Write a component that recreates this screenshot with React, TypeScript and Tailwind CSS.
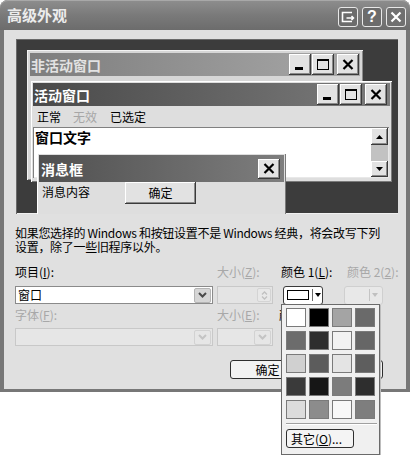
import React from "react";

const raised =
  "shadow-[inset_-1px_-1px_0_#3a3a3a,inset_1px_1px_0_#ffffff,inset_-2px_-2px_0_#8a8a8a]";

function CapBtn({ kind, w = 22, h = 21 }: { kind: "min" | "max" | "close"; w?: number; h?: number }) {
  return (
    <div
      className={`relative flex items-center justify-center bg-[#e2e2e2] ${raised}`}
      style={{ width: w, height: h }}
    >
      {kind === "min" && <div className="absolute left-[6px] bottom-[5px] w-[8px] h-[3px] bg-black" />}
      {kind === "max" && <div className="w-[12px] h-[11px] border border-black border-t-[2px] mb-[1px]" />}
      {kind === "close" && (
        <svg width="12" height="11" viewBox="0 0 12 11">
          <path d="M1.5 1 L10.5 10 M10.5 1 L1.5 10" stroke="#000" strokeWidth="2.2" />
        </svg>
      )}
    </div>
  );
}

function Chevron({ disabled }: { disabled?: boolean }) {
  return (
    <svg width="9" height="6" viewBox="0 0 9 6">
      <path d="M1 1 L4.5 4.5 L8 1" stroke={disabled ? "#c4c4c4" : "#4a4a4a"} strokeWidth="2" fill="none" />
    </svg>
  );
}

function ComboArrow({ disabled }: { disabled?: boolean }) {
  return (
    <div
      className={`w-[17px] h-[15px] rounded-[2px] flex items-center justify-center border ${
        disabled ? "bg-[#e6e6e6] border-[#d2d2d2]" : "bg-[#d6d6d6] border-[#b4b4b4]"
      }`}
    >
      <Chevron disabled={disabled} />
    </div>
  );
}

const swatches = [
  ["#ffffff", "#000000", "#a4a4a4", "#6a6a6a"],
  ["#6c6c6c", "#2e2e2e", "#f2f2f2", "#666666"],
  ["#d0d0d0", "#5c5c5c", "#e4e4e4", "#5e5e5e"],
  ["#3a3a3a", "#161616", "#7c7c7c", "#2e2e2e"],
  ["#dcdcdc", "#8c8c8c", "#f8f8f8", "#7e7e7e"],
];

export default function App() {
  return (
    <div className="w-[412px] h-[455px] bg-white relative overflow-hidden font-['Noto_Sans_CJK_SC','Liberation_Sans',sans-serif] text-black">
      {/* Dialog */}
      <div className="w-[410px] h-[392px] rounded-t-[8px] bg-[#777777] flex flex-col">
        {/* Title bar */}
        <div className="h-[30px] flex items-start rounded-t-[8px] bg-gradient-to-b from-[#8e8e8e] via-[#7a7a7a] to-[#6c6c6c] shadow-[inset_0_1px_0_#a8a8a8]">
          <div className="pl-[7px] pt-[5px] text-[15px] leading-[20px] font-bold text-[#ececec]">
            高级外观
          </div>
          <div className="ml-auto mt-[7px] mr-[4px] flex gap-[4px]">
            <div className="w-[20px] h-[20px] rounded-[3px] border border-[#e8e8e8] bg-[#6c6c6c] flex items-center justify-center">
              <svg width="16" height="14" viewBox="0 0 16 14">
                <path d="M12 2.5 H2.5 V11.5 H12" stroke="#fff" strokeWidth="1.6" fill="none" />
                <path d="M6.5 8 H13.5 M11.5 6 L13.5 8 L11.5 10" stroke="#fff" strokeWidth="1.5" fill="none" />
              </svg>
            </div>
            <div className="w-[20px] h-[20px] rounded-[3px] border border-[#e8e8e8] bg-[#6c6c6c] flex items-center justify-center text-white font-bold text-[16px] leading-none font-['Liberation_Sans',sans-serif]">
              ?
            </div>
            <div className="w-[20px] h-[20px] rounded-[3px] border border-[#e8e8e8] bg-[#707070] flex items-center justify-center">
              <svg width="12" height="12" viewBox="0 0 12 12">
                <path d="M1.5 1.5 L10.5 10.5 M10.5 1.5 L1.5 10.5" stroke="#fff" strokeWidth="2.2" />
              </svg>
            </div>
          </div>
        </div>

        {/* Body */}
        <div className="mx-[4px] h-[359px] bg-[#e0e0e0] flex flex-col">
          {/* Preview canvas */}
          <div className="mt-[9px] ml-[12px] w-[382px] h-[175px] bg-[#3c3c3c] relative overflow-hidden shadow-[inset_1px_1px_0_#6a6a6a,inset_0_-1px_0_#f0f0f0]">
            {/* Inactive window */}
            <div className="absolute left-[11px] top-[11px] w-[336px] h-[130px] bg-[#d6d6d6] shadow-[inset_1px_1px_0_#f2f2f2,inset_-1px_-1px_0_#8a8a8a] p-[3px]">
              <div className="h-[23px] flex items-center bg-gradient-to-r from-[#7e7e7e] to-[#a8a8a8]">
                <span className="pl-[1px] text-[14px] leading-[16px] font-bold text-[#e2e2e2]">非活动窗口</span>
                <div className="ml-auto mr-[1px] flex">
                  <CapBtn kind="min" />
                  <div className="w-[1px]" />
                  <CapBtn kind="max" />
                  <div className="w-[3px]" />
                  <CapBtn kind="close" />
                </div>
              </div>
            </div>

            {/* Active window */}
            <div className="absolute left-[15px] top-[42px] w-[361px] h-[101px] bg-[#dedede] shadow-[inset_1px_1px_0_#ffffff,inset_-1px_-1px_0_#7a7a7a] p-[2px] flex flex-col">
              <div className="h-[23px] shrink-0 flex items-center bg-gradient-to-r from-[#4a4a4a] to-[#7c7c7c]">
                <span className="pl-[1px] text-[14px] leading-[16px] font-bold text-white">活动窗口</span>
                <div className="ml-auto mr-[3px] flex">
                  <CapBtn kind="min" />
                  <div className="w-[1px]" />
                  <CapBtn kind="max" />
                  <div className="w-[3px]" />
                  <CapBtn kind="close" />
                </div>
              </div>
              <div className="h-[21px] shrink-0 flex items-center text-[12px] leading-[14px] pl-[4px]">
                <span>正常</span>
                <span className="ml-[12px] text-[#a6a6a6]">无效</span>
                <span className="ml-[13px]">已选定</span>
              </div>
              <div className="h-[51px] mr-[1px] bg-white flex shadow-[inset_1px_1px_0_#808080,inset_-1px_-1px_0_#e8e8e8]">
                <div className="flex-1 pl-[2px] pt-[2px] text-[14px] leading-[16px] font-bold">窗口文字</div>
                <div className="w-[17px] mt-[1px] mb-[1px] mr-[1px] flex flex-col">
                  <div className={`h-[17px] bg-[#e2e2e2] flex items-center justify-center ${raised}`}>
                    <svg width="7" height="4" viewBox="0 0 7 4"><path d="M0 4 L3.5 0 L7 4 Z" fill="#000" /></svg>
                  </div>
                  <div className="flex-1 bg-[#c2c2c2]" />
                  <div className={`h-[16px] bg-[#e2e2e2] flex items-center justify-center ${raised}`}>
                    <svg width="7" height="4" viewBox="0 0 7 4"><path d="M0 0 L3.5 4 L7 0 Z" fill="#000" /></svg>
                  </div>
                </div>
              </div>
            </div>

            {/* Message box */}
            <div className="absolute left-[21px] top-[114px] w-[249px] h-[64px] bg-[#dedede] shadow-[inset_1px_1px_0_#ffffff,inset_-1px_-1px_0_#7a7a7a] p-[2px] flex flex-col">
              <div className="h-[27px] shrink-0 flex items-center bg-gradient-to-r from-[#505050] to-[#7e7e7e]">
                <span className="pl-[2px] text-[14px] leading-[16px] font-bold text-white">消息框</span>
                <div className="ml-auto mr-[4px]">
                  <CapBtn kind="close" w={22} h={20} />
                </div>
              </div>
              <div className="flex items-start">
                <span className="pl-[3px] pt-[3px] text-[12px] leading-[14px] w-[86px]">消息内容</span>
                <div className={`w-[71px] h-[22px] bg-[#e2e2e2] flex items-center justify-center text-[12px] leading-[14px] ${raised}`}>
                  确定
                </div>
              </div>
            </div>
          </div>

          {/* Form */}
          <div className="pl-[11px] flex flex-col">
            <div className="mt-[12px] flex flex-col text-[12px] leading-[14px] tracking-[-0.3px] whitespace-nowrap">
              <div className="h-[14px]">如果您选择的 Windows 和按钮设置不是 Windows 经典，将会改写下列</div>
              <div className="h-[14px]">设置，除了一些旧程序以外。</div>
            </div>

            {/* Labels row 1 */}
            <div className="mt-[11px] flex text-[12px] leading-[14px] whitespace-nowrap">
              <span className="w-[202px]">项目(<u>I</u>):</span>
              <span className="w-[64px] text-[#a8a8a8]">大小(<u>Z</u>):</span>
              <span className="w-[66px]">颜色 1(<u>L</u>):</span>
              <span className="text-[#a8a8a8]">颜色 2(<u>2</u>):</span>
            </div>

            {/* Controls row 1 */}
            <div className="mt-[7px] flex items-center h-[18px]">
              <div className="w-[198px] h-[18px] bg-white border border-[#8a8a8a] flex items-center pl-[2px] pr-[1px]">
                <span className="flex-1 text-[12px] leading-[14px]">窗口</span>
                <ComboArrow />
              </div>
              <div className="ml-[4px] w-[56px] h-[18px] bg-[#e4e4e4] border border-[#c8c8c8] flex items-center justify-end pr-[1px]">
                <div className="w-[14px] h-[14px] flex flex-col items-center justify-center gap-[1px] bg-[#e8e8e8] border border-[#d4d4d4] rounded-[2px]">
                  <svg width="7" height="4" viewBox="0 0 7 4"><path d="M1 3.5 L3.5 1 L6 3.5" stroke="#c0c0c0" strokeWidth="1.3" fill="none" /></svg>
                  <svg width="7" height="4" viewBox="0 0 7 4"><path d="M1 0.5 L3.5 3 L6 0.5" stroke="#c0c0c0" strokeWidth="1.3" fill="none" /></svg>
                </div>
              </div>
              <div className="ml-[10px] w-[40px] h-[19px] bg-white border border-[#3a3a3a] rounded-[3px] flex items-center pl-[3px]">
                <div className="w-[22px] h-[10px] border border-black bg-white" />
                <div className="ml-[3px] w-[1px] h-[12px] bg-[#6a6a6a]" />
                <svg className="ml-[2px]" width="6" height="4" viewBox="0 0 6 4"><path d="M0 0 L3 4 L6 0 Z" fill="#000" /></svg>
              </div>
              <div className="ml-[21px] w-[39px] h-[19px] bg-[#e8e8e8] border border-[#cfcfcf] rounded-[3px] flex items-center justify-end pr-[4px]">
                <div className="w-[1px] h-[12px] bg-[#c4c4c4]" />
                <svg className="ml-[2px]" width="6" height="4" viewBox="0 0 6 4"><path d="M0 0 L3 4 L6 0 Z" fill="#c0c0c0" /></svg>
              </div>
            </div>

            {/* Labels row 2 */}
            <div className="mt-[4px] flex text-[12px] leading-[14px] whitespace-nowrap">
              <span className="w-[202px] text-[#a8a8a8]">字体(<u>F</u>):</span>
              <span className="w-[62px] text-[#a8a8a8]">大小(<u>E</u>):</span>
              <span>颜色(<u>R</u>):</span>
            </div>

            {/* Controls row 2 */}
            <div className="mt-[6px] flex items-center h-[18px]">
              <div className="w-[198px] h-[18px] bg-[#e6e6e6] border border-[#c8c8c8] flex items-center justify-end pr-[1px]">
                <ComboArrow disabled />
              </div>
              <div className="ml-[4px] w-[56px] h-[18px] bg-[#e6e6e6] border border-[#c8c8c8] flex items-center justify-end pr-[1px]">
                <ComboArrow disabled />
              </div>
              <div className="ml-[8px] w-[40px] h-[19px] bg-white border border-[#3a3a3a] rounded-[3px]" />
              <div className="ml-[4px] w-[24px] h-[19px] bg-[#ececec] border border-[#3a3a3a] rounded-[3px]" />
              <div className="ml-[4px] w-[26px] h-[19px] bg-[#ececec] border border-[#8a8a8a] rounded-[3px]" />
            </div>

            {/* Buttons row */}
            <div className="mt-[14px] flex">
              <div className="ml-[215px] w-[75px] h-[19px] rounded-[3px] border border-[#2e2e2e] bg-[#f2f2f2] flex items-center justify-center text-[12px] leading-[14px]">
                确定
              </div>
              <div className="ml-[3px] w-[75px] h-[19px] rounded-[3px] border border-[#2e2e2e] bg-[#f2f2f2] flex items-center justify-center text-[12px] leading-[14px]">
                取消
              </div>
            </div>
          </div>
        </div>
      </div>

      {/* Colour popup */}
      <div className="absolute left-[281px] top-[304px] w-[99px] h-[151px] bg-[#f0f0f0] border border-[#6a6a6a] shadow-[1px_1px_0_#bdbdbd] pl-[4px] pt-[3px] flex flex-col">
        <div className="grid grid-cols-[repeat(4,20px)] gap-x-[3px] gap-y-[4px]">
          {swatches.flat().map((c, i) => (
            <div key={i} className="w-[20px] h-[19px] border border-[#7a7a7a]" style={{ backgroundColor: c }} />
          ))}
        </div>
        <div className="mt-[4px] w-[91px] h-[2px] border-t border-[#a0a0a0] border-b border-b-white" />
        <div className="mt-[4px] w-[68px] h-[19px] rounded-[3px] border border-[#2e2e2e] bg-[#f4f4f4] flex items-center pl-[4px] text-[12px] leading-[14px] whitespace-nowrap">
          其它(<u>O</u>)...
        </div>
      </div>
    </div>
  );
}
